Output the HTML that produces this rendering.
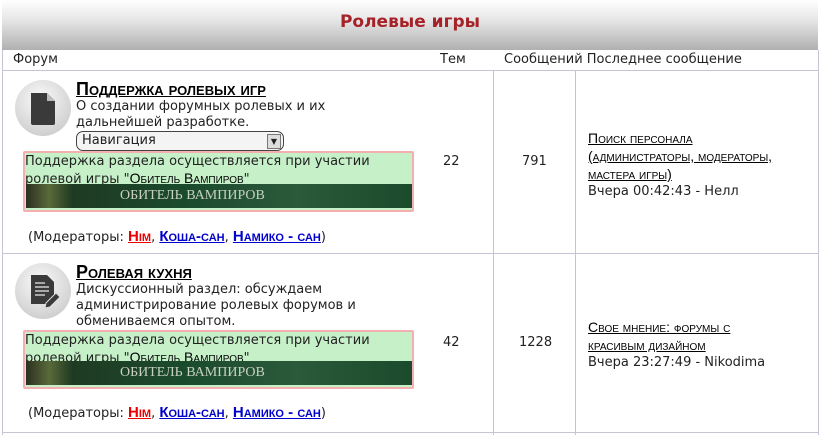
<!DOCTYPE html>
<html><head><meta charset="utf-8"><style>
body{margin:0;width:820px;height:435px;overflow:hidden;background:#fff;font-family:"DejaVu Sans","Liberation Sans",sans-serif;font-size:13px;color:#222}
.hdr{position:absolute;left:2px;top:0;width:816px;height:50px;background:linear-gradient(#fff 0%,#e6e6e6 40%,#b0b0b0 100%);text-align:center;line-height:44px;color:#a52228;font-weight:bold;font-size:17px}
.a{position:absolute;white-space:nowrap}
.vl{position:absolute;width:1px;background:#c4c4d4}
.hl{position:absolute;height:1px;background:#c4c4d4}
.t{font-variant:small-caps;font-weight:bold;font-size:18px;text-decoration:underline;color:#000;font-family:"Liberation Sans",sans-serif}
.ic{position:absolute;width:56px;height:56px;border-radius:50%;background:radial-gradient(circle at 45% 35%,#fafafa,#d0d0d0 75%,#bdbdbd)}
.gb{position:absolute;left:23px;width:387px;background:#c6f0c8;border:2px solid #f4b0b0;border-radius:2px;line-height:16px;padding-top:1px}
.ban{position:absolute;left:1px;right:0;bottom:2px;height:24px;background:linear-gradient(90deg,#2a3020 0%,#5a6a3a 6%,#1f3a22 12%,#1a4a2c 40%,#2a5a3a 70%,#1c4a2c 100%);color:#c8d0c0;font-family:"Liberation Serif",serif;font-size:14px;line-height:24px;padding-left:94px}
.m{font-variant:small-caps;text-decoration:underline;font-size:15px;font-family:"Liberation Sans",sans-serif}
.b{font-weight:bold}
.lp{font-variant:small-caps;text-decoration:underline;color:#000;font-size:14px;font-family:"Liberation Sans",sans-serif}
</style></head><body>
<div class="hdr">Ролевые игры</div>
<div class="vl" style="left:2px;top:50px;height:385px"></div>
<div class="vl" style="left:818px;top:50px;height:385px"></div>
<div class="vl" style="left:493px;top:70px;height:365px"></div>
<div class="vl" style="left:575px;top:70px;height:365px"></div>
<div class="hl" style="left:2px;top:70px;width:816px"></div>
<div class="hl" style="left:2px;top:253px;width:816px"></div>
<div class="hl" style="left:2px;top:432px;width:816px"></div>
<div class="a" style="left:13px;top:52px">Форум</div>
<div class="a" style="left:440px;top:52px">Тем</div>
<div class="a" style="left:504px;top:52px">Сообщений Последнее сообщение</div>

<div class="ic" style="left:15px;top:80px"></div>
<svg class="a" style="left:28px;top:91px" width="30" height="36"><path d="M3 2h16l8 8v22a2 2 0 0 1-2 2H5a2 2 0 0 1-2-2z" fill="#3a3a3a"/><path d="M19 2v8h8z" fill="#bbb"/></svg>
<div class="a" style="left:76px;top:79px"><span class="t">Поддержка ролевых игр</span></div>
<div class="a" style="left:76px;top:99px;line-height:16px">О создании форумных ролевых и их<br>дальнейшей разработке.</div>
<div class="a" style="left:76px;top:131px;border:1px solid #444;border-radius:7px;background:#f4f4f4;line-height:18px;padding-left:5px;box-sizing:border-box;width:208px;height:20px">Навигация<span style="position:absolute;right:2px;top:2px;width:12px;height:13px;border:1px solid #777;background:#ddd;font-size:8px;line-height:13px;text-align:center">▼</span></div>
<div class="gb" style="top:151px;height:56px">Поддержка раздела осуществляется при участии<br>ролевой игры "<span class="m" style="color:#000;font-size:14px">Обитель Вампиров</span>"<div class="ban">ОБИТЕЛЬ ВАМПИРОВ</div></div>
<div class="a" style="left:28px;top:228px">(Модераторы: <span class="m b" style="color:#e00">Him</span>, <span class="m b" style="color:#00c">Коша-сан</span>, <span class="m b" style="color:#00c">Намико - сан</span>)</div>
<div class="a" style="left:443px;top:154px">22</div>
<div class="a" style="left:522px;top:154px">791</div>
<div class="a" style="left:588px;top:130px;line-height:16px"><span class="lp">Поиск персонала<br>(администраторы, модераторы,<br>мастера игры)</span><br>Вчера 00:42:43 - Нелл</div>

<div class="ic" style="left:15px;top:263px"></div>
<svg class="a" style="left:28px;top:273px" width="34" height="36"><path d="M3 2h16l7 7v22H3z" fill="#3a3a3a"/><path d="M7 10h10M7 14h14M7 18h14M7 22h10" stroke="#ccc" stroke-width="1.5"/><path d="M18 30l10-10 4 4-10 10-5 1z" fill="#3a3a3a" stroke="#ddd"/></svg>
<div class="a" style="left:76px;top:262px"><span class="t">Ролевая кухня</span></div>
<div class="a" style="left:76px;top:282px;line-height:16px">Дискуссионный раздел: обсуждаем<br>администрирование ролевых форумов и<br>обмениваемся опытом.</div>
<div class="gb" style="top:330px;height:54px">Поддержка раздела осуществляется при участии<br>ролевой игры "<span class="m" style="color:#000;font-size:14px">Обитель Вампиров</span>"<div class="ban">ОБИТЕЛЬ ВАМПИРОВ</div></div>
<div class="a" style="left:28px;top:404px">(Модераторы: <span class="m b" style="color:#e00">Him</span>, <span class="m b" style="color:#00c">Коша-сан</span>, <span class="m b" style="color:#00c">Намико - сан</span>)</div>
<div class="a" style="left:443px;top:335px">42</div>
<div class="a" style="left:519px;top:335px">1228</div>
<div class="a" style="left:588px;top:319px;line-height:16px"><span class="lp">Свое мнение: форумы с<br>красивым дизайном</span><br>Вчера 23:27:49 - Nikodima</div>
</body></html>
